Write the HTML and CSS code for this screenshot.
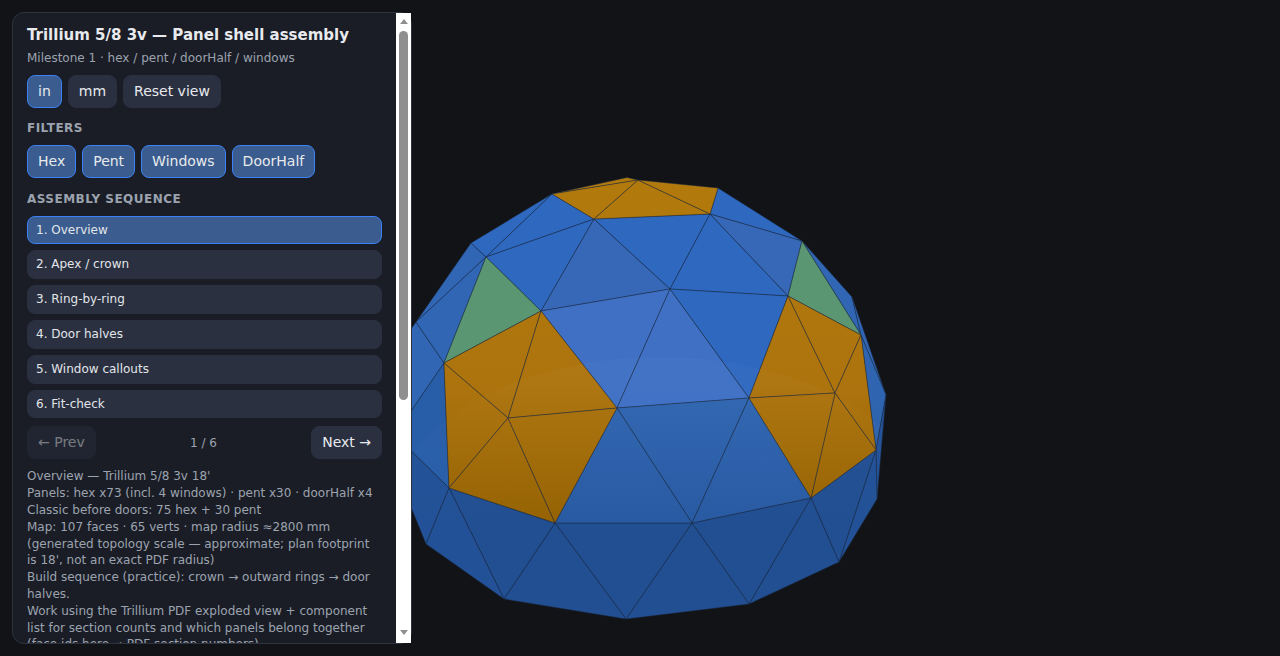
FILE: index.html
```html
<!DOCTYPE html>
<html lang="en">
<head>
    <meta charset="UTF-8">
    <meta name="viewport" content="width=device-width, initial-scale=1.0">
    <title>Trillium 5/8 3v — Panel shell assembly</title>
    <link rel="stylesheet" href="styles.css">
</head>
<body>
    <!-- Dome view -->
    <svg class="dome" viewBox="0 0 1280 656" role="img" aria-label="Dome panel map">
        <defs>
            <linearGradient id="orangeFade" gradientUnits="userSpaceOnUse" x1="0" y1="180" x2="0" y2="520">
                <stop offset="0" stop-color="#b27a0c"/>
                <stop offset="0.6" stop-color="#ad740e"/>
                <stop offset="1" stop-color="#966303"/>
            </linearGradient>
            <linearGradient id="midFade" gradientUnits="userSpaceOnUse" x1="0" y1="398" x2="0" y2="523">
                <stop offset="0" stop-color="#2f65b0"/>
                <stop offset="1" stop-color="#285aa2"/>
            </linearGradient>
            <linearGradient id="sheenFade" gradientUnits="userSpaceOnUse" x1="0" y1="357" x2="0" y2="540">
                <stop offset="0" stop-color="#ffffff" stop-opacity="0.022"/>
                <stop offset="1" stop-color="#ffffff" stop-opacity="0"/>
            </linearGradient>
            <clipPath id="shellClip">
                <polygon points="405,345 416,322 471,243 552,194 627,177.5 718,188 802,241 852,297 886,395 877,499 839,562 749,604 626,619 504,599 426,544 405,490"/>
            </clipPath>
        </defs>

        <!-- outer ring -->
        <g class="faces">
            <polygon class="blue-side" points="400,345 416,322 444,363 405,420"/>
            <polygon class="blue-deep" points="405,420 444,363 449,488 400,440"/>
            <polygon class="blue-low" points="400,440 449,488 426,544 400,480"/>
            <polygon class="blue-side" points="416,322 471,243 486,257"/>
            <polygon class="blue-side" points="416,322 486,257 444,363"/>
            <polygon class="blue-top" points="471,243 552,194 486,257"/>
            <polygon class="blue-top" points="552,194 594,219 486,257"/>
            <polygon class="blue-top" points="486,257 594,219 541,311"/>
            <polygon class="blue-soft" points="594,219 670,289 541,311"/>
            <polygon class="blue-top" points="594,219 710,214 670,289"/>
            <polygon class="blue-top" points="710,214 788,296 670,289"/>
            <polygon class="blue-top" points="718,188 802,241 710,214"/>
            <polygon class="blue-soft" points="710,214 802,241 788,296"/>
            <polygon class="blue-side" points="802,241 852,297 861,335"/>
            <polygon class="blue-side" points="852,297 886,395 861,335"/>
            <polygon class="blue-mid" points="861,335 886,395 876,450"/>
            <polygon class="blue-low" points="886,395 877,499 876,450"/>
            <polygon class="blue-low" points="876,450 877,499 839,562"/>
            <polygon class="blue-bot" points="811,498 876,450 839,562"/>
            <polygon class="blue-bot" points="811,498 839,562 749,604"/>
            <polygon class="blue-bot" points="692,523 811,498 749,604"/>
            <polygon class="blue-bot" points="692,523 749,604 626,619"/>
            <polygon class="blue-bot" points="555,523 692,523 626,619"/>
            <polygon class="blue-bot" points="555,523 626,619 504,599"/>
            <polygon class="blue-bot" points="449,488 555,523 504,599"/>
            <polygon class="blue-low" points="449,488 504,599 426,544"/>

            <!-- middle band -->
            <polygon class="blue-light" points="541,311 670,289 617,408"/>
            <polygon class="blue-light" points="670,289 749,398 617,408"/>
            <polygon class="blue-top" points="670,289 788,296 749,398"/>
            <polygon class="blue-mid" points="617,408 749,398 692,523"/>
            <polygon class="blue-mid" points="617,408 692,523 555,523"/>
            <polygon class="blue-mid" points="749,398 811,498 692,523"/>

            <!-- door and window panels -->
            <polygon class="orange" points="552,194 627,177.5 638,180"/>
            <polygon class="orange" points="552,194 638,180 594,219"/>
            <polygon class="orange" points="638,180 710,214 594,219"/>
            <polygon class="orange" points="638,180 718,188 710,214"/>
            <polygon class="green" points="486,257 541,311 444,363"/>
            <polygon class="green" points="802,241 861,335 788,296"/>
            <polygon class="orange" points="444,363 541,311 508,418"/>
            <polygon class="orange" points="541,311 617,408 508,418"/>
            <polygon class="orange" points="444,363 508,418 449,488"/>
            <polygon class="orange" points="508,418 555,523 449,488"/>
            <polygon class="orange" points="508,418 617,408 555,523"/>
            <polygon class="orange" points="788,296 835,393 749,398"/>
            <polygon class="orange" points="788,296 861,335 835,393"/>
            <polygon class="orange" points="861,335 876,450 835,393"/>
            <polygon class="orange" points="835,393 876,450 811,498"/>
            <polygon class="orange" points="749,398 835,393 811,498"/>
        </g>

        <g clip-path="url(#shellClip)">
            <ellipse class="sheen" cx="660" cy="520" rx="270" ry="163"/>
        </g>
    </svg>

    <!-- Panel -->
    <aside class="panel">
        <div class="panel-body">
            <h1 class="panel-title">Trillium 5/8 3v — Panel shell assembly</h1>
            <p class="panel-sub">Milestone 1 · hex / pent / doorHalf / windows</p>

            <div class="btn-row">
                <button type="button" class="btn is-on">in</button>
                <button type="button" class="btn">mm</button>
                <button type="button" class="btn">Reset view</button>
            </div>

            <h2 class="section-label">Filters</h2>
            <div class="btn-row">
                <button type="button" class="btn is-on">Hex</button>
                <button type="button" class="btn is-on">Pent</button>
                <button type="button" class="btn is-on">Windows</button>
                <button type="button" class="btn is-on">DoorHalf</button>
            </div>

            <h2 class="section-label steps-label">Assembly sequence</h2>
            <div class="steps">
                <button type="button" class="step is-on">1. Overview</button>
                <button type="button" class="step">2. Apex / crown</button>
                <button type="button" class="step">3. Ring-by-ring</button>
                <button type="button" class="step">4. Door halves</button>
                <button type="button" class="step">5. Window callouts</button>
                <button type="button" class="step">6. Fit-check</button>
            </div>

            <div class="step-nav">
                <button type="button" class="btn" disabled>← Prev</button>
                <span class="step-count">1 / 6</span>
                <button type="button" class="btn">Next →</button>
            </div>

            <p class="notes">Overview — Trillium 5/8 3v 18'
Panels: hex x73 (incl. 4 windows) · pent x30 · doorHalf x4
Classic before doors: 75 hex + 30 pent
Map: 107 faces · 65 verts · map radius ≈2800 mm (generated topology scale — approximate; plan footprint is 18', not an exact PDF radius)
Build sequence (practice): crown → outward rings → door halves.
Work using the Trillium PDF exploded view + component list for section counts and which panels belong together (face ids here → PDF section numbers).</p>
        </div>

        <!-- scrollbar -->
        <div class="scrollbar">
            <span class="arrow-up"></span>
            <span class="thumb"></span>
            <span class="arrow-down"></span>
        </div>
    </aside>
</body>
</html>
```

FILE: styles.css
```css
* {
    box-sizing: border-box;
}
html, body {
    height: 100%;
}
body {
    margin: 0;
    overflow: hidden;
    background-color: #121317;
    color: #e8eaed;
    font-family: "DejaVu Sans", sans-serif;
}

/* dome */
.dome {
    display: block;
    width: 100%;
    height: 100%;
}
.faces polygon {
    stroke: #1b2a42;
    stroke-opacity: 0.8;
    stroke-width: 0.6;
    stroke-linejoin: round;
}
.blue-top { fill: #2e68bf; }
.blue-soft { fill: #3768b8; }
.blue-light { fill: #3f70c4; }
.blue-side { fill: #3066b4; }
.blue-mid { fill: url(#midFade); }
.blue-deep { fill: #285ea8; }
.blue-low { fill: #225197; }
.blue-bot { fill: #214f92; }
.orange { fill: url(#orangeFade); }
.green { fill: #5a9672; }
.sheen { fill: url(#sheenFade); }

/* panel */
.panel {
    position: absolute;
    top: 12px;
    left: 12px;
    display: flex;
    width: 400px;
    height: 632px;
    background-color: #1a1d26;
    border: 1px solid #2d3440;
    border-radius: 12px;
}
.panel-body {
    flex: 1;
    min-width: 0;
    padding: 12px 14px 0;
    overflow: hidden;
    border-radius: 11px 0 0 11px;
}
.panel-title {
    margin: 0 0 5px;
    font-size: 15px;
    font-weight: 700;
    line-height: 20px;
}
.panel-sub {
    margin: 0 0 8px;
    font-size: 12px;
    line-height: 17px;
    color: #9ca3af;
}
.btn-row {
    display: flex;
    gap: 6px;
}
.btn {
    padding: 8px 10px;
    background-color: #2a3040;
    color: #e8eaed;
    border: 1px solid #2a3040;
    border-radius: 8px;
    font-family: inherit;
    font-size: 14px;
    line-height: 15px;
}
.btn.is-on {
    background-color: #3a5c8e;
    border-color: #3b82f6;
}
.btn:disabled {
    opacity: 0.45;
}
.section-label {
    margin: 13px 0 9px;
    font-size: 12px;
    font-weight: 700;
    line-height: 15px;
    letter-spacing: 0.04em;
    text-transform: uppercase;
    color: #9ca3af;
}
.steps-label {
    margin: 14px 0 8.6px;
}
.steps {
    display: flex;
    flex-direction: column;
    gap: 6px;
}
.step {
    padding: 6px 8px;
    background-color: #2a3040;
    color: #e2e5ea;
    border: 1px solid #2a3040;
    border-radius: 8px;
    font-family: inherit;
    font-size: 12px;
    line-height: 14.8px;
    text-align: left;
}
.step.is-on {
    background-color: #3a5c8e;
    border-color: #3b82f6;
}
.step-nav {
    display: flex;
    align-items: center;
    justify-content: space-between;
    margin-top: 8px;
}
.step-count {
    font-size: 12px;
    color: #9ca3af;
}
.notes {
    margin: 9px 0 0;
    font-size: 12px;
    line-height: 1.4;
    white-space: pre-line;
    color: #9ca3af;
}

/* drawn scrollbar */
.scrollbar {
    display: flex;
    flex-direction: column;
    align-items: center;
    flex: 0 0 15px;
    padding: 6px 0 8px;
    background-color: #ffffff;
}
.arrow-up,
.arrow-down {
    width: 0;
    height: 0;
    border-left: 4.5px solid transparent;
    border-right: 4.5px solid transparent;
}
.arrow-up {
    border-bottom: 5px solid #8f8f8f;
}
.arrow-down {
    margin-top: auto;
    border-top: 5px solid #8f8f8f;
}
.thumb {
    width: 9px;
    height: 369px;
    margin-top: 7px;
    background-color: #8f8f8f;
    border-radius: 5px;
}
```
